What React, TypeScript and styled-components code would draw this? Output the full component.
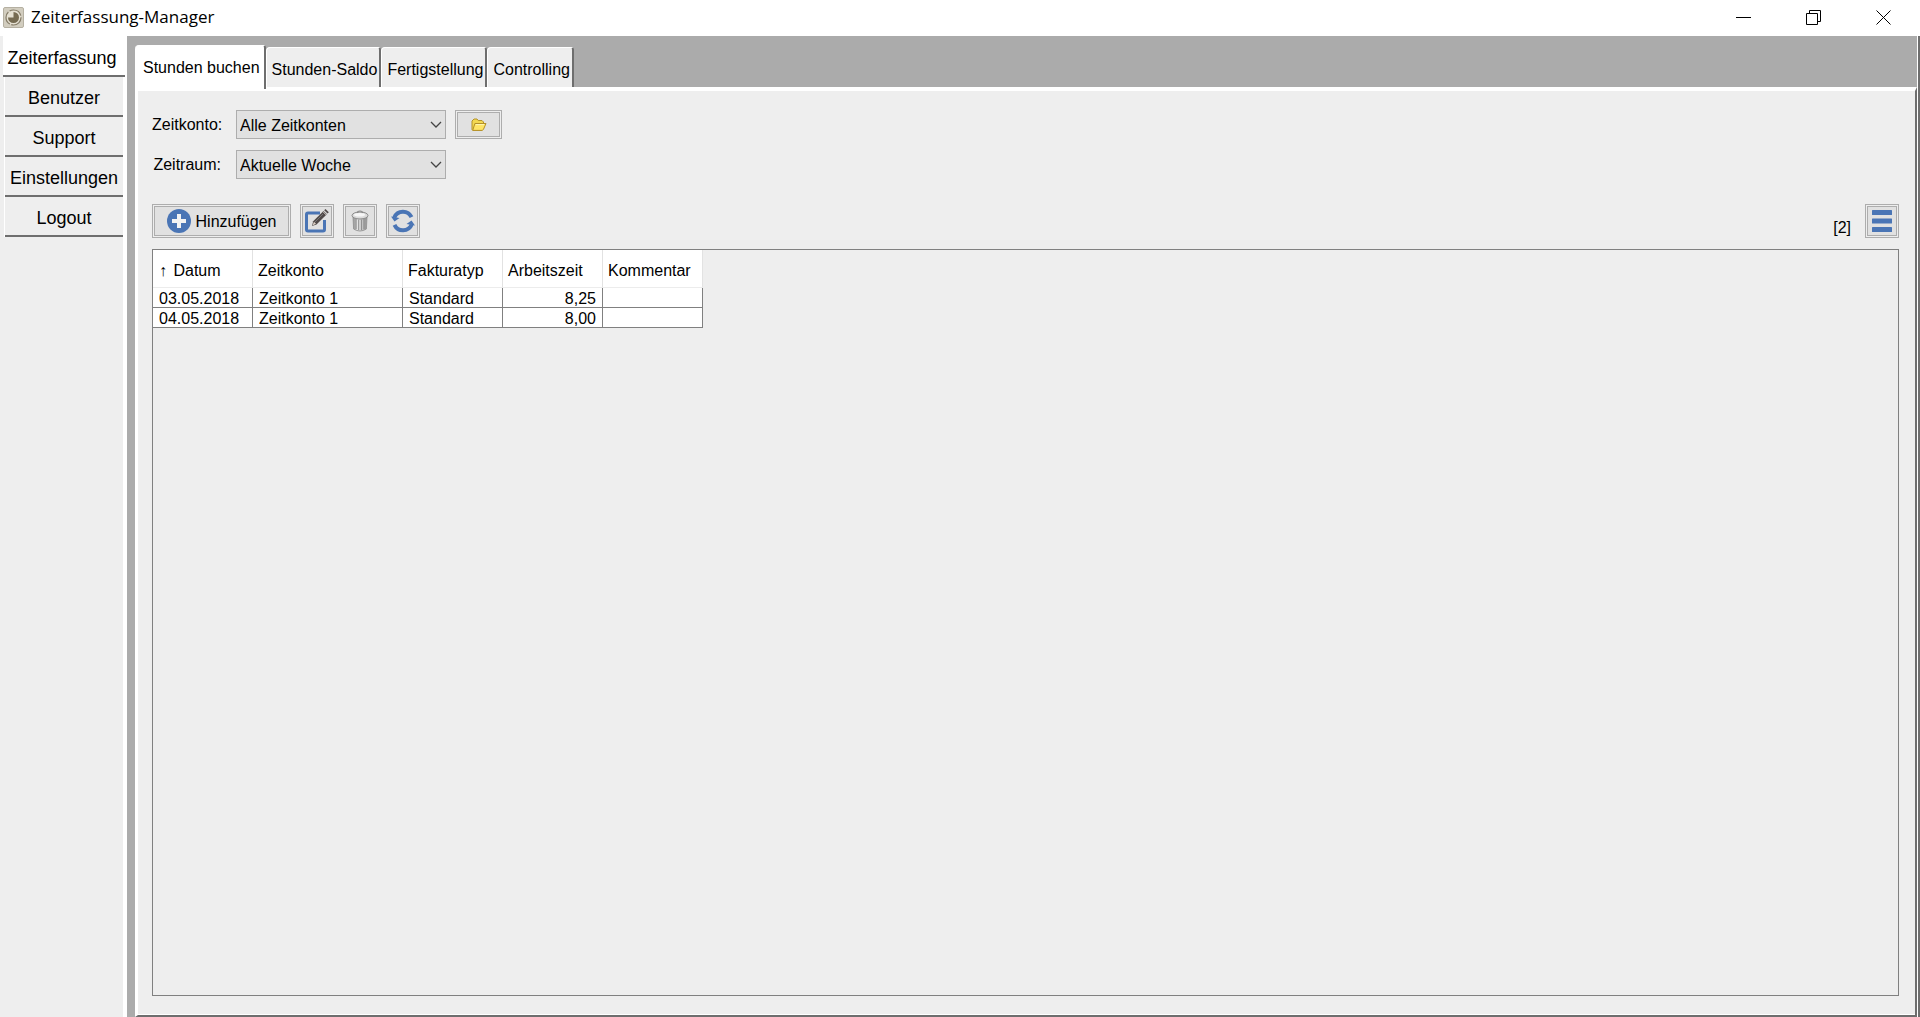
import React, { useState } from "react";
import styled, { createGlobalStyle } from "styled-components";

const GlobalStyle = createGlobalStyle`
  *, *::before, *::after { box-sizing: border-box; }
  body { margin: 0; background: #eeeeee; }
  body, button, select { font-family: "Liberation Sans", Arial, sans-serif; font-size: 16px; color: #000; }
  button { margin: 0; padding: 0; border: 0; }
`;

const face = "#eeeeee";
const frame = "#ababab";
const shade = "#6e6e6e";

const Window = styled.div`
  display: flex;
  flex-direction: column;
  min-height: 100vh;
  background: ${face};
`;

const TitleBar = styled.header`
  display: flex;
  align-items: center;
  height: 36px;
  padding: 0 2px 2px 3px;
  background: #fff;
`;

const Title = styled.h1`
  flex: 1;
  margin: 0 0 0 7px;
  font: 400 17px/24px "Open Sans", "Noto Sans", sans-serif;
`;

const CaptionButton = styled.button`
  display: grid;
  place-items: center;
  width: 70px;
  height: 32px;
  background: transparent;
`;

const Body = styled.div`
  flex: 1;
  display: flex;
`;

const Sidebar = styled.nav`
  flex: none;
  width: 127px;
  padding-left: 3px;
  border-right: 4px solid #fff;
`;

const NavButton = styled.button<{ $active?: boolean }>`
  display: block;
  width: ${(p) => (p.$active ? 122 : 118)}px;
  height: ${(p) => (p.$active ? 41 : 40)}px;
  margin-left: ${(p) => (p.$active ? 0 : 2)}px;
  padding: ${(p) => (p.$active ? "6px 4px 0 0" : "5px 0 0")};
  border-bottom: 2px solid ${shade};
  background: ${(p) => (p.$active ? "#fff" : face)};
  box-shadow: ${(p) => (p.$active ? "none" : "-1px 0 #fff")};
  font-size: 18px;
`;

const Main = styled.main`
  flex: 1;
  min-width: 0;
  display: flex;
  flex-direction: column;
  padding-left: 8px;
  background: ${frame};
  border-right: 2px solid ${shade};
`;

const TabBar = styled.div`
  display: flex;
  align-items: flex-end;
  height: 51px;
  border-right: 1px solid #fff;
`;

const Tab = styled.button<{ $active?: boolean }>`
  position: relative;
  height: ${(p) => (p.$active ? 44 : 40)}px;
  margin-bottom: ${(p) => (p.$active ? -2 : 0)}px;
  padding: ${(p) => (p.$active ? "0 4px 0 8px" : "4px 2px 0 5px")};
  border-left: ${(p) => (p.$active ? 0 : 1)}px solid #fff;
  border-top: 1px solid #fff;
  border-right: 2px solid ${shade};
  border-radius: 4px 3px 0 0;
  background: ${(p) => (p.$active ? "#fff" : face)};
  white-space: nowrap;
`;

const Page = styled.section`
  flex: 1;
  display: flex;
  flex-direction: column;
  padding: 19px 16px 19px 14px;
  background: ${face};
  border-style: solid;
  border-width: 4px 2px 2px 3px;
  border-color: #fff ${shade} ${shade} #fff;
  margin-right: 1px;
  box-shadow: 1px 0 #fff, inset 0 -1px #fff;
`;

const Filters = styled.div`
  display: grid;
  grid-template-columns: 69px 210px 47px;
  column-gap: 9px;
  row-gap: 11px;
  align-items: center;
  margin-bottom: 25px;
`;

const Label = styled.label`
  grid-column: 1;
  padding-top: 1px;
  text-align: right;
  line-height: 20px;
`;

const SelectBox = styled.div`
  display: grid;
  grid-template-columns: 1fr 20px;
  align-items: center;
  margin-left: 6px;
  width: 210px;
  svg { grid-area: 1 / 2; pointer-events: none; z-index: 1; justify-self: center; }
`;

const Select = styled.select`
  grid-area: 1 / 1 / 2 / 3;
  appearance: none;
  width: 100%;
  height: 29px;
  margin: 0;
  padding: 2px 24px 0 3px;
  border: 1px solid #adadad;
  border-radius: 0;
  background: #e1e1e1;
`;

const ToolButton = styled.button<{ $width: number; $height?: number }>`
  display: flex;
  align-items: center;
  justify-content: center;
  flex: none;
  gap: 5px;
  width: ${(p) => p.$width}px;
  height: ${(p) => p.$height ?? 34}px;
  background: #e1e1e1;
  border: 1px solid #adadad;
  box-shadow: inset 0 0 0 1px #eee, inset 0 0 0 2px #adadad;
  span { padding-top: 2px; }
`;

const FolderSlot = styled.div`
  margin-left: 6px;
`;

const Toolbar = styled.div`
  display: flex;
  gap: 9px;
  margin-bottom: 11px;
`;

const Count = styled.output`
  margin-left: auto;
  padding: 15px 5px 0 0;
  line-height: 18px;
`;

const GridPane = styled.div`
  flex: 1;
  border: 1px solid #808080;
`;

const Table = styled.table`
  table-layout: fixed;
  width: 550px;
  border-collapse: separate;
  border-spacing: 0;
  background: #fff;
`;

const Th = styled.th<{ $width: number }>`
  width: ${(p) => p.$width}px;
  height: 38px;
  padding: 4px 0 0 5px;
  border-right: 1px solid #e2e2e2;
  border-bottom: 1px solid #ececec;
  font-weight: 400;
  text-align: left;
  white-space: nowrap;
`;

const SortMark = styled.span`
  margin: 0 2px 0 1px;
`;

const Td = styled.td<{ $numeric?: boolean }>`
  height: 20px;
  padding: 2px 6px 0;
  line-height: 17px;
  border-right: 1px solid #808080;
  border-bottom: 1px solid #808080;
  text-align: ${(p) => (p.$numeric ? "right" : "left")};
`;

const AppIcon = () => (
  <svg width="21" height="21" viewBox="0 0 21 21" aria-hidden="true">
    <rect x=".5" y=".5" width="20" height="20" rx="1.5" fill="#d2cdbf" stroke="#b5b0a2" />
    <circle cx="10.5" cy="10.5" r="7.5" fill="#e5e0d2" stroke="#857c68" strokeWidth="1.2" strokeDasharray="14 1.5" />
    <path d="M10.5 10.5V5A5.5 5.5 0 1 1 5 10.5Z" fill="#766b52" />
  </svg>
);

const Chevron = () => (
  <svg width="12" height="8" viewBox="0 0 12 8" fill="none" stroke="#444" strokeWidth="1.3" aria-hidden="true">
    <path d="M1 1l5 5 5-5" />
  </svg>
);

const FolderIcon = () => (
  <svg width="16" height="14" viewBox="0 0 16 14" aria-hidden="true">
    <path d="M1 11.500V3L3 1h3l1.200 1.500H11l1.500 1.500v2.500l-2 6H2Z" fill="#f3d850" stroke="#b3922a" />
    <path d="M3.900 5.500h11.100l-2.600 6-1.200.9H1.700Z" fill="#ffe566" stroke="#b3902a" strokeLinejoin="round" />
    <path d="M4.800 6.600h8.200" stroke="#fff7b8" />
  </svg>
);

const PlusIcon = () => (
  <svg width="24" height="24" viewBox="0 0 24 24" aria-hidden="true">
    <circle cx="12" cy="12" r="12" fill="#4a75b5" />
    <path d="M12 5v14M5 12h14" stroke="#f3f3f3" strokeWidth="4" />
  </svg>
);

const EditIcon = () => (
  <svg width="26" height="26" viewBox="0 0 26 26" fill="none" aria-hidden="true">
    <path d="M16 5H4Q2.500 5 2.500 6.500V21.500Q2.500 23 4 23H19Q20.500 23 20.500 21.500V12" stroke="#4a75b5" strokeWidth="3" />
    <path d="M8 18l1.200-4.700L19.500 3l3.300 3.300L12.500 16.600Z" fill="#514a49" />
    <path d="M8.500 17.500l1.500-3.700 2 2Z" fill="#ddd2c8" />
    <path d="M20.200 2.300l1.300-1.300 3.300 3.300-1.300 1.300Z" fill="#514a49" />
    <path d="M18.800 3.500l3.600 3.600" stroke="#d0c9c4" />
    <path d="M11 14L19 6" stroke="#777" />
  </svg>
);

const TrashIcon = () => (
  <svg width="18" height="22" viewBox="0 0 18 22" aria-hidden="true">
    <defs>
      <linearGradient id="metal">
        <stop offset="0" stopColor="#888" />
        <stop offset=".35" stopColor="#ececec" />
        <stop offset=".65" stopColor="#c8c8c8" />
        <stop offset="1" stopColor="#888" />
      </linearGradient>
    </defs>
    <path d="M2 6h14l-.6 13Q9 23 2.600 19Z" fill="url(#metal)" stroke="#999" />
    <path d="M5 9v10M7.700 9.500v10.500M10.400 9.500v10.500M13 9v10" stroke="#8a8a8a" strokeWidth="1" />
    <ellipse cx="9" cy="5.500" rx="8" ry="3.500" fill="#dcdcdc" stroke="#888" />
    <ellipse cx="8.500" cy="4.700" rx="5.500" ry="1.800" fill="#f6f6f6" />
    <path d="M6.500 3q0-2 2.500-2t2.500 2" fill="none" stroke="#8a8a8a" strokeWidth="1.200" />
  </svg>
);

const RefreshIcon = () => (
  <svg width="26" height="26" viewBox="0 0 26 26" fill="none" aria-hidden="true">
    <path d="M4.300 9.500A9.400 9.400 0 0 1 21.500 9.200M21.700 16.500A9.400 9.400 0 0 1 4.500 16.800" stroke="#4a75b5" strokeWidth="4" />
    <path d="M1 8.500l8.500 1.500L4.500 13.500ZM25 17.500L16.500 16l5-3.500Z" fill="#4a75b5" />
  </svg>
);

const MenuIcon = () => (
  <svg width="20" height="22" viewBox="0 0 20 22" fill="#4a75b5" aria-hidden="true">
    <rect width="20" height="5" rx=".5" />
    <rect y="8.500" width="20" height="5" rx=".5" />
    <rect y="17" width="20" height="5" rx=".5" />
  </svg>
);

const captionIcons = [
  { name: "Minimieren", d: "M0 7.500h15" },
  { name: "Wiederherstellen", d: "M.5 3.500h11v11H.5ZM3.500 3.500V.5h11v11h-3" },
  { name: "Schließen", d: "M.5 .5l14 14M14.500 .5l-14 14" },
];

const navItems = ["Zeiterfassung", "Benutzer", "Support", "Einstellungen", "Logout"];
const tabs = ["Stunden buchen", "Stunden-Saldo", "Fertigstellung", "Controlling"];
const columns = [
  { title: "Datum", width: 100, sorted: true },
  { title: "Zeitkonto", width: 150 },
  { title: "Fakturatyp", width: 100 },
  { title: "Arbeitszeit", width: 100 },
  { title: "Kommentar", width: 100 },
];
const rows = [
  ["03.05.2018", "Zeitkonto 1", "Standard", "8,25", ""],
  ["04.05.2018", "Zeitkonto 1", "Standard", "8,00", ""],
];

export default function App() {
  const [nav, setNav] = useState(0);
  const [tab, setTab] = useState(0);
  return (
    <Window>
      <GlobalStyle />
      <TitleBar>
        <AppIcon />
        <Title>Zeiterfassung-Manager</Title>
        {captionIcons.map((icon) => (
          <CaptionButton key={icon.name} type="button" aria-label={icon.name}>
            <svg width="15" height="15" viewBox="0 0 15 15" fill="none" stroke="#000" aria-hidden="true">
              <path d={icon.d} />
            </svg>
          </CaptionButton>
        ))}
      </TitleBar>
      <Body>
        <Sidebar>
          {navItems.map((item, i) => (
            <NavButton key={item} type="button" $active={i === nav} onClick={() => setNav(i)}>
              {item}
            </NavButton>
          ))}
        </Sidebar>
        <Main>
          <TabBar role="tablist">
            {tabs.map((item, i) => (
              <Tab key={item} type="button" role="tab" aria-selected={i === tab} $active={i === tab} onClick={() => setTab(i)}>
                {item}
              </Tab>
            ))}
          </TabBar>
          <Page>
            <Filters>
              <Label htmlFor="konto">Zeitkonto:</Label>
              <SelectBox>
                <Select id="konto">
                  <option>Alle Zeitkonten</option>
                </Select>
                <Chevron />
              </SelectBox>
              <FolderSlot>
                <ToolButton type="button" $width={47} $height={29} aria-label="Zeitkonto öffnen">
                  <FolderIcon />
                </ToolButton>
              </FolderSlot>
              <Label htmlFor="zeitraum">Zeitraum:</Label>
              <SelectBox>
                <Select id="zeitraum">
                  <option>Aktuelle Woche</option>
                </Select>
                <Chevron />
              </SelectBox>
            </Filters>
            <Toolbar>
              <ToolButton type="button" $width={139}>
                <PlusIcon />
                <span>Hinzufügen</span>
              </ToolButton>
              <ToolButton type="button" $width={34} aria-label="Bearbeiten">
                <EditIcon />
              </ToolButton>
              <ToolButton type="button" $width={34} aria-label="Löschen">
                <TrashIcon />
              </ToolButton>
              <ToolButton type="button" $width={34} aria-label="Aktualisieren">
                <RefreshIcon />
              </ToolButton>
              <Count>[2]</Count>
              <ToolButton type="button" $width={34} aria-label="Menü">
                <MenuIcon />
              </ToolButton>
            </Toolbar>
            <GridPane>
              <Table>
                <thead>
                  <tr>
                    {columns.map((c) => (
                      <Th key={c.title} scope="col" $width={c.width}>
                        {c.sorted && <SortMark>↑ </SortMark>}
                        {c.title}
                      </Th>
                    ))}
                  </tr>
                </thead>
                <tbody>
                  {rows.map((row) => (
                    <tr key={row[0]}>
                      {row.map((cell, i) => (
                        <Td key={columns[i].title} $numeric={i === 3}>
                          {cell}
                        </Td>
                      ))}
                    </tr>
                  ))}
                </tbody>
              </Table>
            </GridPane>
          </Page>
        </Main>
      </Body>
    </Window>
  );
}
